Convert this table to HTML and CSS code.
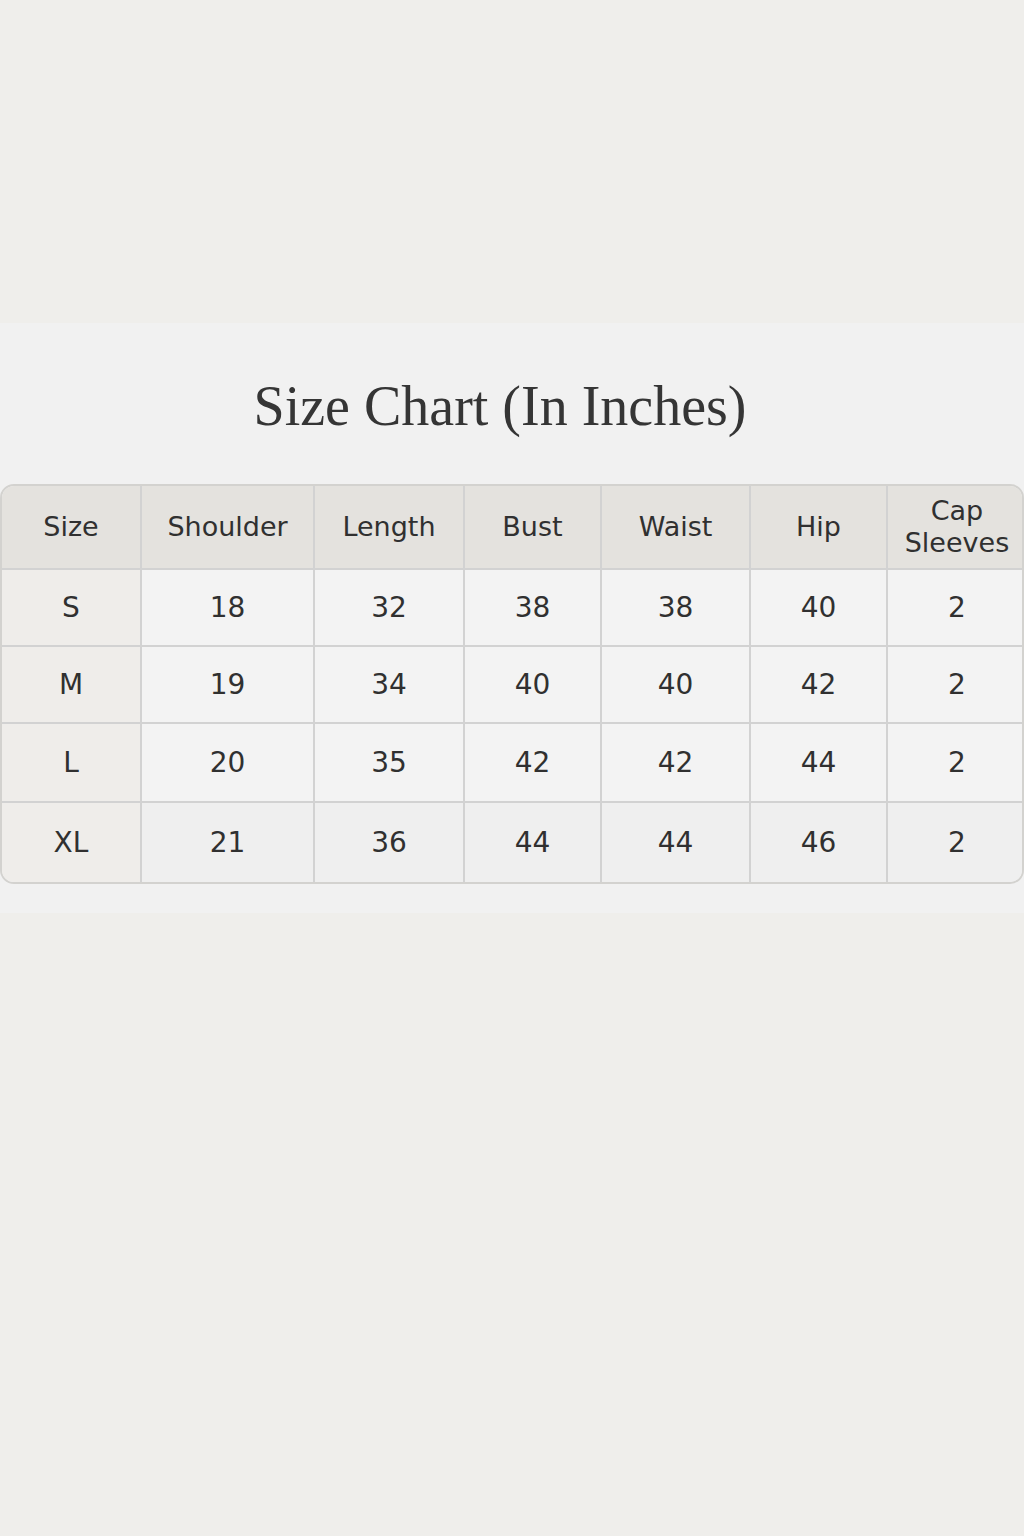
FILE: index.html
```html
<!DOCTYPE html>
<html lang="en">
<head>
<meta charset="utf-8">
<title>Size Chart</title>
<link rel="stylesheet" href="styles.css">
</head>
<body>
<div class="page">
  <section class="panel">
    <h1 class="title">Size Chart (In Inches)</h1>
    <div class="chart">
      <div class="cell head first">Size</div>
      <div class="cell head">Shoulder</div>
      <div class="cell head">Length</div>
      <div class="cell head">Bust</div>
      <div class="cell head">Waist</div>
      <div class="cell head">Hip</div>
      <div class="cell head last">Cap<br>Sleeves</div>

      <div class="cell size">S</div>
      <div class="cell">18</div>
      <div class="cell">32</div>
      <div class="cell">38</div>
      <div class="cell">38</div>
      <div class="cell">40</div>
      <div class="cell last">2</div>

      <div class="cell size">M</div>
      <div class="cell">19</div>
      <div class="cell">34</div>
      <div class="cell">40</div>
      <div class="cell">40</div>
      <div class="cell">42</div>
      <div class="cell last">2</div>

      <div class="cell size">L</div>
      <div class="cell">20</div>
      <div class="cell">35</div>
      <div class="cell">42</div>
      <div class="cell">42</div>
      <div class="cell">44</div>
      <div class="cell last">2</div>

      <div class="cell size bottom">XL</div>
      <div class="cell bottom">21</div>
      <div class="cell bottom">36</div>
      <div class="cell bottom">44</div>
      <div class="cell bottom">44</div>
      <div class="cell bottom">46</div>
      <div class="cell last bottom">2</div>
    </div>
  </section>
</div>
</body>
</html>
```
FILE: styles.css
```css
html, body {
  margin: 0;
  padding: 0;
  background: #efeeeb;
}
.page {
  width: 1024px;
  height: 1536px;
  padding-top: 323px;
  box-sizing: border-box;
}
.panel {
  background: #f1f1f1;
  height: 590px;
  padding-top: 53px;
  box-sizing: border-box;
}
.title {
  margin: 0 0 0 -24px;
  text-align: center;
  font-family: "Liberation Serif", "DejaVu Serif", serif;
  font-weight: normal;
  font-size: 56px;
  line-height: 60px;
  color: #353535;
  height: 108px;
}
.chart {
  display: grid;
  grid-template-columns: 140px 173px 150px 137px 149px 137px 138px;
  grid-template-rows: 84px 77px 77px 79px 79px;
  border: 2px solid #d3d2cf;
  border-radius: 14px;
  overflow: hidden;
  width: 1024px;
  box-sizing: border-box;
  background: #f3f3f3;
  font-family: "DejaVu Sans", "Open Sans", sans-serif;
  color: #303030;
}
.cell {
  display: flex;
  align-items: center;
  justify-content: center;
  text-align: center;
  font-size: 28px;
  border-right: 2px solid #d2d2d2;
  border-bottom: 2px solid #d2d2d2;
  background: #f3f3f3;
}
.cell.last {
  border-right: none;
}
.cell.bottom {
  border-bottom: none;
  background: #efefef;
}
.head {
  background: #e4e2de;
  font-size: 27px;
  line-height: 32px;
}
.size {
  background: #efedea;
}
.size.bottom {
  background: #efedea;
}
```
